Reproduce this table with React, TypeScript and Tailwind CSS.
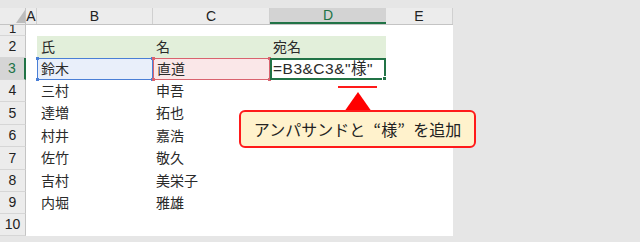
import React from "react";

const data: [string, string][] = [
  ["三村", "申吾"],
  ["達増", "拓也"],
  ["村井", "嘉浩"],
  ["佐竹", "敬久"],
  ["吉村", "美栄子"],
  ["内堀", "雅雄"],
];

const rowH = ["h-[22px]", "h-[23px]", "h-[22px]", "h-[23px]", "h-[22px]", "h-[22px]"];

function RowHead({ n, h, active }: { n: string; h: string; active?: boolean }) {
  return (
    <div
      className={`${h} w-[26px] shrink-0 flex items-center justify-center border-b border-[#d6d6d6] text-[14px] ${
        active
          ? "bg-[#d5d5d5] text-[#217346] border-r-2 border-r-[#217346]"
          : "bg-[#ececec] text-[#222] border-r border-r-[#c4c4c4]"
      }`}
    >
      {n}
    </div>
  );
}

export default function App() {
  const font = "font-['Liberation_Sans','Noto_Sans_CJK_JP',sans-serif]";
  return (
    <div className={`relative w-[640px] h-[242px] bg-[#e6e6e6] overflow-hidden ${font}`}>
      <div className="pt-[8px] w-[453px]">
        {/* column header */}
        <div className="flex h-[17px] border-b border-[#c4c4c4] bg-[#ececec] text-[14px] text-[#222]">
          <div className="relative w-[26px] shrink-0 border-r border-[#c4c4c4]">
            <svg className="absolute left-[16px] top-[2px]" width="9" height="13" viewBox="0 0 9 13">
              <polygon points="9,0 9,13 0,13" fill="#bcbcbc" />
            </svg>
          </div>
          <div className="w-[11px] shrink-0 flex items-center justify-center border-r border-[#d0d0d0] leading-none">A</div>
          <div className="w-[116px] shrink-0 flex items-center justify-center border-r border-[#d0d0d0] leading-none">B</div>
          <div className="w-[117px] shrink-0 flex items-center justify-center border-r border-[#d0d0d0] leading-none">C</div>
          <div className="w-[116px] shrink-0 flex items-center justify-center bg-[#d3d3d3] text-[#217346] border-b-2 border-[#217346] leading-none">
            D
          </div>
          <div className="w-[67px] shrink-0 flex items-center justify-center border-r border-[#d0d0d0] leading-none">E</div>
        </div>

        {/* row 1 */}
        <div className="flex h-[11px] bg-white">
          <div className="h-[11px] w-[26px] shrink-0 flex items-end justify-center overflow-hidden border-b border-[#d6d6d6] border-r border-r-[#c4c4c4] bg-[#ececec] text-[13px] leading-[13px] text-[#222]">
            <span>1</span>
          </div>
          <div className="flex-1" />
        </div>

        {/* row 2 */}
        <div className="flex h-[22px] bg-white">
          <RowHead n="2" h="h-[22px]" />
          <div className="w-[11px] shrink-0" />
          <div className="flex w-[349px] bg-[#e2efda] text-[14px] text-[#2a2a2a] items-center">
            <div className="w-[116px] pl-[4px]">氏</div>
            <div className="w-[117px] pl-[3px]">名</div>
            <div className="w-[116px] pl-[3px]">宛名</div>
          </div>
          <div className="flex-1" />
        </div>

        {/* row 3 */}
        <div className="flex h-[22px] bg-white">
          <RowHead n="3" h="h-[22px]" active />
          <div className="w-[11px] shrink-0" />
          <div className="relative w-[116px] h-[22px] bg-[#e9effa] border border-[#4a7fd6] flex items-center pl-[3px] text-[14px] text-[#2a2a2a]">
            鈴木
            <span className="absolute -left-[2px] -top-[2px] w-[3px] h-[3px] bg-[#4a7fd6]" />
            <span className="absolute -left-[2px] -bottom-[2px] w-[3px] h-[3px] bg-[#4a7fd6]" />
            <span className="absolute -right-[2px] -top-[2px] w-[3px] h-[3px] bg-[#4a7fd6]" />
            <span className="absolute -right-[2px] -bottom-[2px] w-[3px] h-[3px] bg-[#4a7fd6]" />
          </div>
          <div className="relative w-[117px] h-[22px] bg-[#fae7e8] border border-[#d9636e] flex items-center pl-[3px] text-[14px] text-[#2a2a2a]">
            直道
            <span className="absolute -left-[2px] -top-[2px] w-[3px] h-[3px] bg-[#d9636e]" />
            <span className="absolute -left-[2px] -bottom-[2px] w-[3px] h-[3px] bg-[#d9636e]" />
            <span className="absolute -right-[2px] -top-[2px] w-[3px] h-[3px] bg-[#d9636e]" />
            <span className="absolute -right-[2px] -bottom-[2px] w-[3px] h-[3px] bg-[#d9636e]" />
          </div>
          <div className="relative w-[116px] h-[22px] bg-white border-2 border-[#217346] flex items-center pl-[1px] text-[15.5px] tracking-[0.5px] text-[#2a2a2a] whitespace-nowrap">
            =B3&amp;C3&amp;"様"
            <span className="absolute -right-[3px] -bottom-[3px] w-[5px] h-[5px] bg-[#217346] border border-white" />
          </div>
          <div className="flex-1" />
        </div>

        {/* rows 4-9 */}
        {data.map(([a, b], i) => (
          <div key={i} className={`flex ${rowH[i]} bg-white`}>
            <RowHead n={String(i + 4)} h={rowH[i]} />
            <div className="w-[11px] shrink-0" />
            <div className="w-[116px] flex items-center pl-[4px] text-[14px] text-[#2a2a2a]">{a}</div>
            <div className="w-[117px] flex items-center pl-[3px] text-[14px] text-[#2a2a2a]">{b}</div>
            <div className="flex-1" />
          </div>
        ))}

        {/* row 10 */}
        <div className="flex h-[22px] bg-white">
          <RowHead n="10" h="h-[22px]" />
          <div className="flex-1" />
        </div>
      </div>

      {/* underline */}
      <div className="absolute left-[338px] top-[86px] w-[39px] h-[2px] bg-[#ff1a1a]" />
      {/* triangle */}
      <svg className="absolute left-[343px] top-[92px]" width="30" height="20" viewBox="0 0 30 20">
        <polygon points="15,0 29,20 1,20" fill="#ff0000" />
      </svg>
      {/* callout */}
      <div className="absolute left-[239px] top-[110px] w-[237px] h-[38px] rounded-[6px] border-2 border-[#ff1a1a] bg-[#fff2cc] flex items-center justify-center text-[16px] text-[#222] whitespace-nowrap font-['Noto_Sans_CJK_JP',sans-serif]">
        <span>アンパサンドと</span>
        <span className="inline-block w-[16px] text-right">“</span>
        <span>様</span>
        <span className="inline-block w-[16px] text-left">”</span>
        <span>を追加</span>
      </div>
    </div>
  );
}
